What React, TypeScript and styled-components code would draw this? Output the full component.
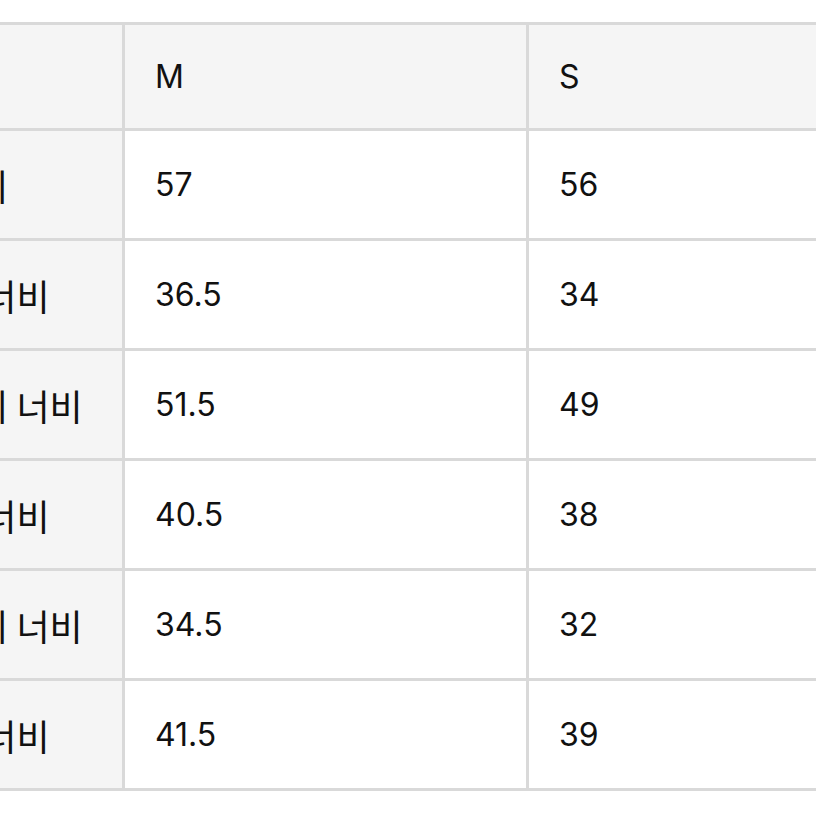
import React from "react";
import styled, { createGlobalStyle } from "styled-components";

const GlobalStyle = createGlobalStyle`
  html, body {
    margin: 0;
    padding: 0;
    background: #ffffff;
  }
  body {
    font-family: "Inter", "Noto Sans CJK KR", sans-serif;
  }
`;

const Viewport = styled.div`
  width: 816px;
  height: 816px;
  overflow: hidden;
  padding-top: 22px;
  box-sizing: border-box;
  background: #ffffff;
`;

const Grid = styled.div`
  display: grid;
  grid-template-columns: 243px 401px 400px;
  grid-auto-rows: 107px;
  grid-template-rows: 103px;
  gap: 3px;
  padding: 3px;
  margin-left: -124px;
  width: max-content;
  background: #d9d9d9;
`;

const Cell = styled.div<{ $shade?: boolean }>`
  display: flex;
  align-items: center;
  padding-left: 30px;
  background: ${(p) => (p.$shade ? "#f5f5f5" : "#ffffff")};
  color: #111111;
  font-size: 32px;
  font-weight: 400;
  white-space: nowrap;
  overflow: hidden;
`;

const Label = styled.span`
  font-family: "Noto Sans CJK KR", "Inter", sans-serif;
  font-size: 36px;
  color: #111111;
`;

const rows: [string, string, string][] = [
  ["총길이", "57", "56"],
  ["허리 너비", "36.5", "34"],
  ["엉덩이 너비", "51.5", "49"],
  ["골반 너비", "40.5", "38"],
  ["허벅지 너비", "34.5", "32"],
  ["밑단 너비", "41.5", "39"],
];

export default function App() {
  return (
    <>
      <GlobalStyle />
      <Viewport>
        <Grid>
          <Cell $shade />
          <Cell $shade>M</Cell>
          <Cell $shade>S</Cell>
          {rows.map(([label, m, s]) => (
            <React.Fragment key={label}>
              <Cell $shade>
                <Label>{label}</Label>
              </Cell>
              <Cell>{m}</Cell>
              <Cell>{s}</Cell>
            </React.Fragment>
          ))}
        </Grid>
      </Viewport>
    </>
  );
}
